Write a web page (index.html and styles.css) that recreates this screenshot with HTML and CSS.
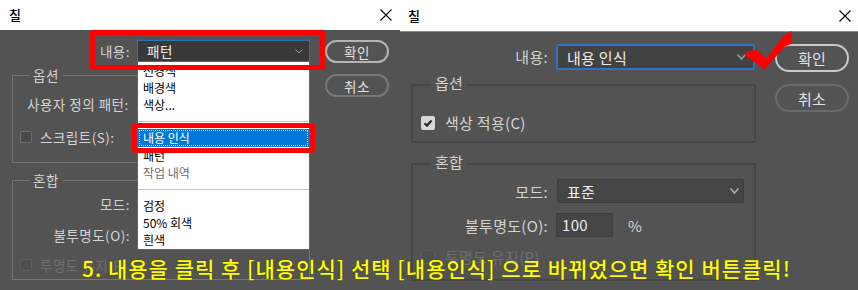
FILE: index.html
```html
<!DOCTYPE html>
<html>
  <head>
    <meta charset="utf-8">
    <title>칠</title>
    <link rel="stylesheet" href="styles.css">
  </head>
  <body>
    <div class="page">

      <!-- before: list open -->
      <div class="dlg dlg_small">
        <div class="titlebar">
          <span class="title">칠</span>
          <svg class="close" width="12" height="12" viewBox="0 0 12 12"><path d="M0.5 0.5L11.5 11.5M11.5 0.5L0.5 11.5" stroke="#000" stroke-width="1.1" fill="none"/></svg>
        </div>
        <div class="dlg_body">
          <div class="main">
            <div class="row row_top">
              <span class="lbl">내용:</span>
              <div class="select sel_focus">
                <span>패턴</span>
                <svg width="8" height="5" viewBox="0 0 8 5"><path d="M0.5 0.5L4 4L7.5 0.5" stroke="#9a9a9a" fill="none"/></svg>
              </div>
            </div>
            <div class="group grp_opt">
              <div class="legend">옵션</div>
              <div class="custom">사용자 정의 패턴:</div>
              <div class="check_row"><span class="box"></span><span class="ctext">스크립트(S):</span></div>
            </div>
            <div class="group grp_mix">
              <div class="legend">혼합</div>
              <div class="row row_mode"><span class="lbl">모드:</span></div>
              <div class="row row_opacity"><span class="lbl">불투명도(O):</span></div>
              <div class="check_row off"><span class="box"></span><span class="ctext">투명도 유지(P)</span></div>
            </div>
          </div>
          <div class="btns">
            <div class="btn btn_ok">확인</div>
            <div class="btn">취소</div>
          </div>
        </div>

        <ul class="menu">
          <li>전경색</li>
          <li>배경색</li>
          <li>색상...</li>
          <li class="sep"></li>
          <li class="hot">내용 인식</li>
          <li>패턴</li>
          <li class="dim">작업 내역</li>
          <li class="sep"></li>
          <li>검정</li>
          <li>50% 회색</li>
          <li>흰색</li>
        </ul>
        <div class="mark mark_top"></div>
        <div class="mark mark_item"></div>
      </div>

      <!-- after: content aware picked -->
      <div class="dlg dlg_big">
        <div class="titlebar">
          <span class="title">칠</span>
          <svg class="close" width="12" height="12" viewBox="0 0 12 12"><path d="M0.5 0.5L11.5 11.5M11.5 0.5L0.5 11.5" stroke="#000" stroke-width="1.1" fill="none"/></svg>
        </div>
        <div class="dlg_body">
          <div class="main">
            <div class="row row_top">
              <span class="lbl">내용:</span>
              <div class="select sel_focus">
                <span>내용 인식</span>
                <svg width="9" height="6" viewBox="0 0 9 6"><path d="M0.5 0.5L4.5 5L8.5 0.5" stroke="#a0a0a0" stroke-width="1.5" fill="none"/></svg>
              </div>
            </div>
            <div class="group grp_opt">
              <div class="legend">옵션</div>
              <div class="check_row">
                <span class="box on"><svg width="14" height="14" viewBox="0 0 14 14"><path d="M3.5 7.2L6 9.6L10.6 4.4" stroke="#2b2b2b" stroke-width="2.2" fill="none"/></svg></span>
                <span class="ctext">색상 적용(C)</span>
              </div>
            </div>
            <div class="group grp_mix">
              <div class="legend">혼합</div>
              <div class="row row_mode">
                <span class="lbl">모드:</span>
                <div class="select sel_plain">
                  <span>표준</span>
                  <svg width="9" height="6" viewBox="0 0 9 6"><path d="M0.5 0.5L4.5 5L8.5 0.5" stroke="#b4b4b4" stroke-width="1.5" fill="none"/></svg>
                </div>
              </div>
              <div class="row row_opacity">
                <span class="lbl">불투명도(O):</span>
                <div class="field">100</div>
                <span class="pct">%</span>
              </div>
              <div class="check_row off"><span class="box"></span><span class="ctext">투명도 유지(P)</span></div>
            </div>
          </div>
          <div class="btns">
            <div class="btn btn_ok">확인</div>
            <div class="btn">취소</div>
          </div>
        </div>

        <svg class="tick" width="56" height="44" viewBox="0 0 56 44"><polygon points="4.7,25.3 16.3,21.3 26.3,30.3 43,8.7 51.3,2.7 52.3,15.3 44.7,18.7 24.7,41.3 4.7,27.3" fill="#ff0000"/></svg>
      </div>

    </div>

    <div class="caption">5. 내용을 클릭 후 [내용인식] 선택 [내용인식] 으로 바뀌었으면 확인 버튼클릭!</div>
  </body>
</html>
```

FILE: styles.css
```css
* {
  margin: 0;
  padding: 0;
  box-sizing: border-box;
}

body {
  width: 858px;
  height: 290px;
  overflow: hidden;
  position: relative;
  background: #535353;
  color: #d4d4d4;
  font-family: "Noto Sans CJK KR", "Noto Sans", sans-serif;
}

.page {
  display: flex;
  height: 290px;
}

.dlg {
  position: relative;
  display: flex;
  flex-direction: column;
}

.dlg_small {
  width: 400px;
  font-size: 13.5px;
  letter-spacing: 0.5px;
}

.dlg_big {
  width: 458px;
  font-size: 15px;
  letter-spacing: 0.3px;
}

/* title bars */

.titlebar {
  display: flex;
  align-items: center;
  justify-content: space-between;
  background: #fff;
  color: #000;
}

.dlg_small .titlebar {
  height: 30px;
  padding: 0 8px 0 9px;
}

.dlg_big .titlebar {
  height: 32px;
  padding: 0 7px 0 8px;
  border-bottom: 1px solid #8c8c8c;
}

.title {
  font-size: 13px;
  line-height: 16px;
  font-weight: 500;
}

.close {
  display: block;
}

.dlg_body {
  flex: 1;
  display: flex;
  align-items: flex-start;
  background: #535353;
}

.row {
  display: flex;
  align-items: center;
}

.lbl {
  flex: none;
  text-align: right;
}

.select {
  display: flex;
  align-items: center;
  justify-content: space-between;
  color: #eeeeee;
}

.group {
  border: 1px solid #757575;
}

.legend {
  width: fit-content;
  background: #535353;
  padding: 0 4px;
}

.check_row {
  display: flex;
  align-items: center;
}

.box {
  flex: none;
  display: block;
  background: #494949;
  border: 1px solid #6f6f6f;
  border-radius: 2px;
}

.off {
  color: #6e6e6e;
}

.off .box {
  background: #4f4f4f;
  border-color: #5e5e5e;
}

.btn {
  display: flex;
  align-items: center;
  justify-content: center;
  border: 2px solid #787878;
  color: #e2e2e2;
}

.btn_ok {
  border-color: #b4b4b4;
}

/* left one */

.dlg_small .dlg_body {
  padding: 10px 0 0 12px;
}

.dlg_small .main {
  width: 298px;
}

.dlg_small .row_top {
  height: 22px;
}

.dlg_small .row_top .lbl {
  width: 118px;
  margin-right: 7px;
  line-height: 22px;
}

.dlg_small .select {
  width: 173px;
  height: 22px;
  padding: 0 6px 0 9px;
  background: #383838;
  border: 1px solid #2e6fb6;
}

.dlg_small .legend {
  margin: -9px 0 0 16px;
  line-height: 16px;
}

.dlg_small .grp_opt {
  margin-top: 13px;
  height: 88px;
}

.dlg_small .custom {
  margin: 11px 0 0 14px;
  line-height: 20px;
}

.dlg_small .check_row {
  line-height: 20px;
  margin: 13px 0 0 7px;
}

.dlg_small .box {
  width: 12px;
  height: 12px;
  margin-right: 8px;
}

.dlg_small .grp_mix {
  margin-top: 17px;
  height: 100px;
}

.dlg_small .grp_mix .row {
  line-height: 20px;
}

.dlg_small .grp_mix .lbl {
  width: 117px;
}

.dlg_small .row_mode {
  margin-top: 6px;
}

.dlg_small .row_opacity {
  margin-top: 11px;
}

.dlg_small .grp_mix .check_row {
  margin-top: 10px;
}

.dlg_small .btns {
  width: 64px;
  margin-left: 15px;
}

.dlg_small .btn {
  height: 23px;
  border-radius: 12px;
}

.dlg_small .btn + .btn {
  margin-top: 11px;
}

.menu {
  position: absolute;
  left: 137px;
  top: 62px;
  width: 173px;
  height: 188px;
  list-style: none;
  background: #fff;
  border: 1px solid #2e6fb6;
  border-top: 0;
  color: #000;
  font-size: 12px;
  letter-spacing: 0;
}

.menu li {
  height: 17px;
  line-height: 17px;
  padding-left: 5px;
}

.menu .sep {
  height: 16px;
  padding: 0;
  display: flex;
  align-items: center;
}

.menu .sep::after {
  content: "";
  flex: 1;
  border-top: 1px solid #c4c4c4;
}

.menu .hot {
  height: 18px;
  line-height: 18px;
  background: #0078d7;
  color: #fff;
  outline: 1px dotted #b9d6f3;
  outline-offset: -2px;
}

.menu .dim {
  color: #6d6d6d;
}

.mark {
  position: absolute;
  border: 5px solid #ff0000;
  border-radius: 3px;
}

.mark_top {
  left: 90px;
  top: 30px;
  width: 235px;
  height: 40px;
}

.mark_item {
  left: 132px;
  top: 123px;
  width: 183px;
  height: 30px;
}

/* right one */

.dlg_big .dlg_body {
  padding: 12px 0 0 11px;
}

.dlg_big .main {
  width: 345px;
}

.dlg_big .row_top {
  height: 26px;
}

.dlg_big .row_top .lbl {
  width: 137px;
  margin-right: 8px;
  line-height: 26px;
}

.dlg_big .sel_focus {
  width: 199px;
  height: 26px;
  padding: 0 7px 0 9px;
  background: #424242;
  border: 2px solid #3171c2;
  border-radius: 2px;
}

.dlg_big .group {
  border: 2px solid #474747;
  border-radius: 2px;
}

.dlg_big .legend {
  margin: -12px 0 0 18px;
  line-height: 18px;
}

.dlg_big .grp_opt {
  margin-top: 14px;
  height: 59px;
}

.dlg_big .check_row {
  line-height: 20px;
  margin: 21px 0 0 8px;
}

.dlg_big .box {
  width: 14px;
  height: 14px;
  margin-right: 10px;
}

.dlg_big .box.on {
  background: #d8d8d8;
  border-color: #d8d8d8;
}

.box svg {
  display: block;
  margin: -1px;
}

.dlg_big .grp_mix {
  margin-top: 20px;
  height: 118px;
}

.dlg_big .grp_mix .lbl {
  width: 135px;
  margin-right: 8px;
}

.dlg_big .row_mode {
  margin-top: 8px;
}

.dlg_big .sel_plain {
  width: 187px;
  height: 24px;
  margin-left: 1px;
  padding: 0 4px 0 9px;
  background: #454545;
  border: 1px solid #3d3d3d;
  border-radius: 2px;
}

.dlg_big .row_opacity {
  margin-top: 10px;
}

.field {
  width: 57px;
  height: 24px;
  line-height: 22px;
  padding-left: 5px;
  background: #454545;
  border: 1px solid #3d3d3d;
  color: #eeeeee;
}

.pct {
  margin-left: 15px;
}

.dlg_big .grp_mix .check_row {
  margin-top: 10px;
}

.dlg_big .btns {
  width: 74px;
  margin-left: 19px;
}

.dlg_big .btn {
  height: 28px;
  border-radius: 14px;
}

.dlg_big .btn_ok {
  border-color: #c8c8c8;
}

.dlg_big .btn + .btn {
  margin-top: 12px;
  border-color: #6a6a6a;
}

.tick {
  position: absolute;
  left: 340px;
  top: 28px;
}

.caption {
  position: absolute;
  left: 82px;
  top: 254px;
  font-size: 21px;
  line-height: 28px;
  font-weight: 500;
  letter-spacing: 1px;
  color: #ffff00;
  white-space: nowrap;
  text-shadow: 0 0 1px #3a3a00;
}
```
